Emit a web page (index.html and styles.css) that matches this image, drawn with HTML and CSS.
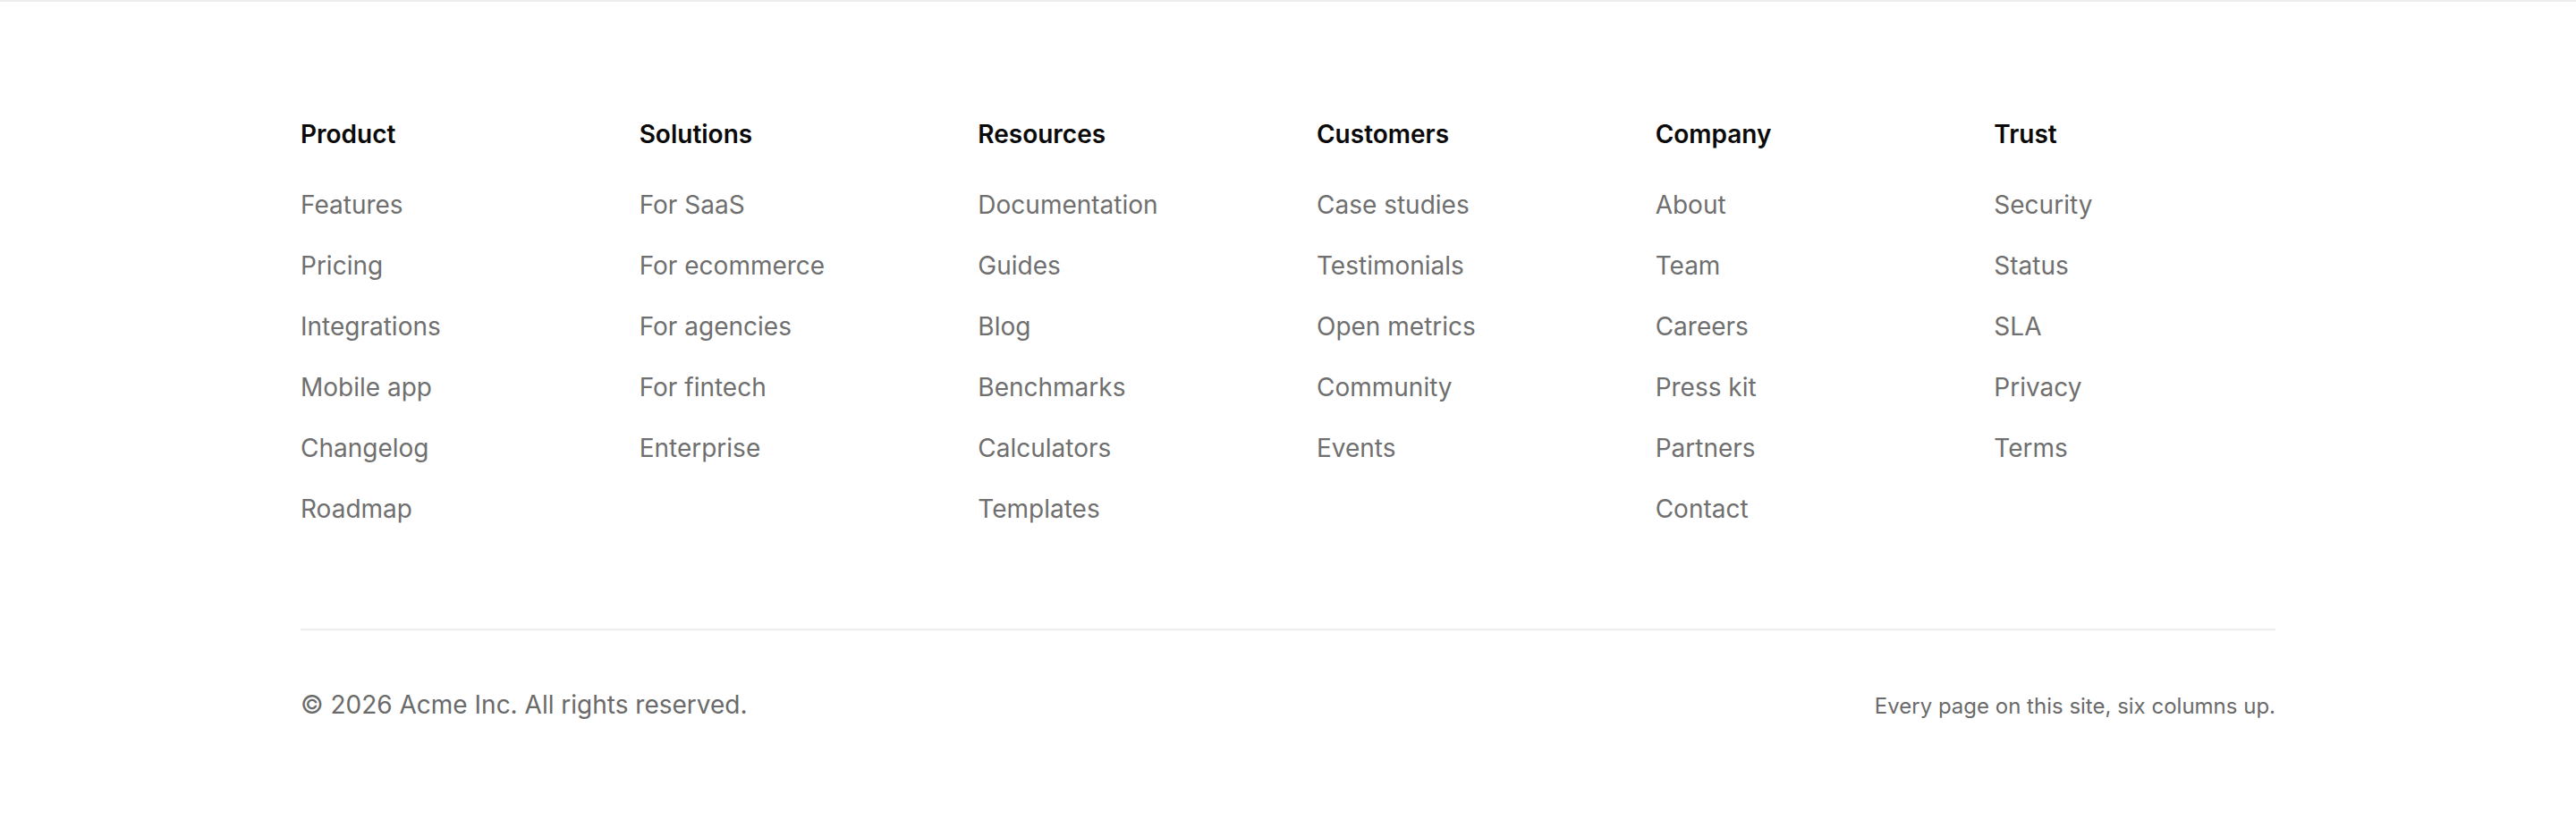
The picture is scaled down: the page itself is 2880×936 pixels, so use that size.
FILE: index.html
```html
<!DOCTYPE html>
<html lang="en">
<head>
<meta charset="utf-8">
<title>Footer</title>
<link rel="stylesheet" href="styles.css">
</head>
<body>
<footer class="site-footer">
  <div class="footer-inner">
    <nav class="footer-grid">
      <div class="footer-col">
        <h3 class="col-title">Product</h3>
        <ul class="col-links">
          <li><a href="#">Features</a></li>
          <li><a href="#">Pricing</a></li>
          <li><a href="#">Integrations</a></li>
          <li><a href="#">Mobile app</a></li>
          <li><a href="#">Changelog</a></li>
          <li><a href="#">Roadmap</a></li>
        </ul>
      </div>
      <div class="footer-col">
        <h3 class="col-title">Solutions</h3>
        <ul class="col-links">
          <li><a href="#">For SaaS</a></li>
          <li><a href="#">For ecommerce</a></li>
          <li><a href="#">For agencies</a></li>
          <li><a href="#">For fintech</a></li>
          <li><a href="#">Enterprise</a></li>
        </ul>
      </div>
      <div class="footer-col">
        <h3 class="col-title">Resources</h3>
        <ul class="col-links">
          <li><a href="#">Documentation</a></li>
          <li><a href="#">Guides</a></li>
          <li><a href="#">Blog</a></li>
          <li><a href="#">Benchmarks</a></li>
          <li><a href="#">Calculators</a></li>
          <li><a href="#">Templates</a></li>
        </ul>
      </div>
      <div class="footer-col">
        <h3 class="col-title">Customers</h3>
        <ul class="col-links">
          <li><a href="#">Case studies</a></li>
          <li><a href="#">Testimonials</a></li>
          <li><a href="#">Open metrics</a></li>
          <li><a href="#">Community</a></li>
          <li><a href="#">Events</a></li>
        </ul>
      </div>
      <div class="footer-col">
        <h3 class="col-title">Company</h3>
        <ul class="col-links">
          <li><a href="#">About</a></li>
          <li><a href="#">Team</a></li>
          <li><a href="#">Careers</a></li>
          <li><a href="#">Press kit</a></li>
          <li><a href="#">Partners</a></li>
          <li><a href="#">Contact</a></li>
        </ul>
      </div>
      <div class="footer-col">
        <h3 class="col-title">Trust</h3>
        <ul class="col-links">
          <li><a href="#">Security</a></li>
          <li><a href="#">Status</a></li>
          <li><a href="#">SLA</a></li>
          <li><a href="#">Privacy</a></li>
          <li><a href="#">Terms</a></li>
        </ul>
      </div>
    </nav>
    <div class="footer-bottom">
      <p class="copyright">© 2026 Acme Inc. All rights reserved.</p>
      <p class="tagline">Every page on this site, six columns up.</p>
    </div>
  </div>
</footer>
</body>
</html>
```
FILE: styles.css
```css
* {
  box-sizing: border-box;
}

html,
body {
  margin: 0;
  padding: 0;
  background: #ffffff;
}

body {
  font-family: Inter, "Noto Sans", "Liberation Sans", sans-serif;
  color: #0a0a0a;
}

.site-footer {
  border-top: 2px solid #ededed;
}

.footer-inner {
  max-width: 2208px;
  margin: 0 auto;
  padding-top: 130px;
}

.footer-grid {
  display: grid;
  grid-template-columns: repeat(6, 1fr);
  column-gap: 64px;
  align-items: start;
}

.col-title {
  margin: 0 0 41px;
  font-size: 28px;
  line-height: 36px;
  font-weight: 600;
  color: #0a0a0a;
}

.col-links {
  list-style: none;
  margin: 0;
  padding: 0;
  display: flex;
  flex-direction: column;
  gap: 28px;
}

.col-links a {
  display: block;
  font-size: 28px;
  line-height: 40px;
  color: #6f6f6f;
  text-decoration: none;
}

.footer-bottom {
  margin-top: 114px;
  border-top: 2px solid #ededed;
  padding-top: 63px;
  display: flex;
  justify-content: space-between;
  align-items: baseline;
}

.copyright {
  margin: 0;
  font-size: 28px;
  line-height: 40px;
  color: #6a6a6a;
}

.tagline {
  margin: 0;
  font-size: 24px;
  line-height: 40px;
  color: #6a6a6a;
}
```
